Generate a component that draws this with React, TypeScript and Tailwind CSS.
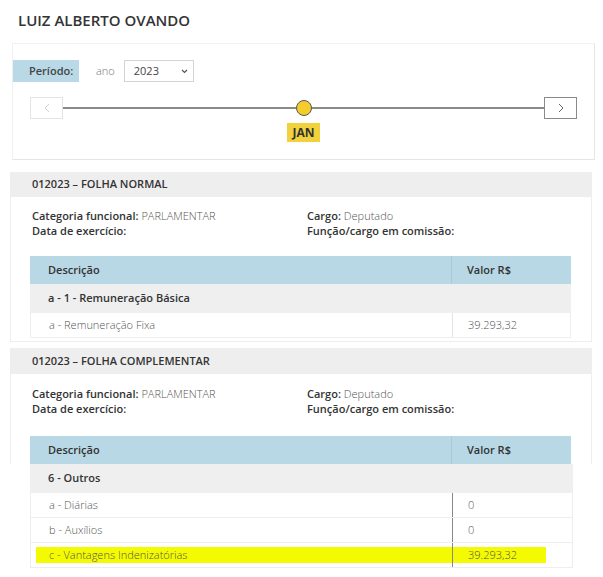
import React from "react";

const font = { fontFamily: '"Open Sans", "Noto Sans", Arial, sans-serif' };

function InfoBlock() {
  return (
    <div className="flex pl-[21px] text-[11px] leading-[15px] text-[#333]">
      <div className="w-[275px]">
        <div>
          <span className="font-semibold">Categoria funcional:</span>{" "}
          <span className="font-light text-[#555]">PARLAMENTAR</span>
        </div>
        <div className="font-semibold">Data de exercício:</div>
      </div>
      <div>
        <div>
          <span className="font-semibold">Cargo:</span>{" "}
          <span className="font-light text-[#555]">Deputado</span>
        </div>
        <div className="font-semibold">Função/cargo em comissão:</div>
      </div>
    </div>
  );
}

function HeaderRow() {
  return (
    <div className="flex h-[28px] bg-[#b8d8e6] text-[11px] font-semibold text-[#333]">
      <div className="flex w-[422px] items-center border-r border-[#a9cbd9] pl-[18px]">Descrição</div>
      <div className="flex flex-1 items-center pl-[15px]">Valor R$</div>
    </div>
  );
}

function GroupRow({ label }: { label: string }) {
  return (
    <div className="flex h-[29px] items-center bg-[#efefef] pl-[18px] text-[11px] font-semibold text-[#333]">
      {label}
    </div>
  );
}

function DataRow({ label, value, highlight, dark }: { label: string; value: string; highlight?: boolean; dark?: boolean }) {
  return (
    <div className="flex h-[25px] border-b border-[#eeeeee] bg-white text-[11px] font-light text-[#555]">
      <div className={"flex w-[423px] items-center border-l border-[#eeeeee] " + (dark ? "border-r border-r-[#888]" : "border-r border-r-[#e4e4e4]")}>
        <div className={"ml-[5px] flex h-[16px] w-[418px] items-center pl-[13px] " + (highlight ? "bg-[#f4fb00]" : "")}>{label}</div>
      </div>
      <div className="flex flex-1 items-center border-r border-[#eeeeee]">
        <div className={"flex h-[16px] w-[93px] items-center pl-[15px] " + (highlight ? "bg-[#f4fb00]" : "")}>{value}</div>
      </div>
    </div>
  );
}

export default function App() {
  return (
    <div className="relative h-[577px] w-[603px] overflow-hidden bg-white" style={font}>
      <div className="pl-[18px] pt-[10px] text-[15px] font-semibold leading-[20px] text-[#333]">LUIZ ALBERTO OVANDO</div>

      {/* Period card */}
      <div className="ml-[12px] mr-[8px] mt-[13px] h-[117px] border border-[#e6e6e6] border-l-[#f0f0f0] border-t-[#f2f2f2]">
        <div className="mt-[16px] flex h-[22px] items-center">
          <div className="flex h-[22px] w-[66px] items-center bg-[#b9d9e6] pl-[16px] text-[11px] font-semibold text-[#444]">Período:</div>
          <div className="ml-[17px] text-[11px] font-light text-[#777]">ano</div>
          <div className="ml-[9px] flex h-[22px] w-[70px] items-center justify-between border border-[#d4d4d4] pl-[9px] pr-[5px] text-[11px] text-[#444]">
            <span>2023</span>
            <svg width="7" height="5" viewBox="0 0 7 5"><path d="M1 1 L3.5 3.5 L6 1" fill="none" stroke="#555" strokeWidth="1.2" /></svg>
          </div>
        </div>
        <div className="mt-[15px] flex h-[22px] items-center pl-[17px]">
          <div className="flex h-[22px] w-[33px] items-center justify-center border border-[#e4e4e4] bg-white">
            <svg width="6" height="10" viewBox="0 0 6 10"><path d="M5 1 L1 5 L5 9" fill="none" stroke="#d0d0d0" strokeWidth="1" /></svg>
          </div>
          <div className="relative h-[22px] flex-1">
            <div className="absolute left-0 right-0 top-[10px] h-[1.5px] bg-[#8a8a8a]" />
            <div className="absolute left-[233px] top-[3px] h-[16px] w-[16px] rounded-full border border-[#555] bg-[#f3cd2c]" />
          </div>
          <div className="mr-[17px] flex h-[22px] w-[33px] items-center justify-center border border-[#8a8a8a] bg-white">
            <svg width="6" height="10" viewBox="0 0 6 10"><path d="M1 1 L5 5 L1 9" fill="none" stroke="#666" strokeWidth="1" /></svg>
          </div>
        </div>
        <div className="ml-[274px] mt-[4px] flex h-[19px] w-[33px] items-center justify-center bg-[#f2d23c] text-[12px] font-bold text-[#333]">JAN</div>
      </div>

      {/* Section 1 */}
      <div className="ml-[10px] mr-[11px] mt-[12px] border-b border-[#eeeeee]">
        <div className="flex h-[25px] items-center bg-[#eeeeee] pl-[22px] text-[11px] font-semibold text-[#333]">012023 – FOLHA NORMAL</div>
        <div className="border-l border-r border-[#eeeeee] pb-[3px] pt-[11px]">
          <InfoBlock />
          <div className="ml-[19px] mr-[20px] mt-[18px]">
            <HeaderRow />
            <GroupRow label="a - 1 - Remuneração Básica" />
            <DataRow label="a - Remuneração Fixa" value="39.293,32" />
          </div>
        </div>
      </div>

      {/* Section 2 */}
      <div className="ml-[10px] mr-[11px] mt-[6px]">
        <div className="flex h-[26px] items-center bg-[#eeeeee] pl-[22px] text-[11px] font-semibold text-[#333]">012023 – FOLHA COMPLEMENTAR</div>
        <div className="border-l border-r border-[#eeeeee] pt-[12px]">
          <InfoBlock />
          <div className="ml-[19px] mr-[20px] mt-[20px]">
            <HeaderRow />
          </div>
        </div>
        <div className="ml-[20px] mr-[19px]">
          <GroupRow label="6 - Outros" />
          <DataRow label="a - Diárias" value="0" dark />
          <DataRow label="b - Auxílios" value="0" dark />
          <DataRow label="c - Vantagens Indenizatórias" value="39.293,32" highlight dark />
        </div>
      </div>
    </div>
  );
}
